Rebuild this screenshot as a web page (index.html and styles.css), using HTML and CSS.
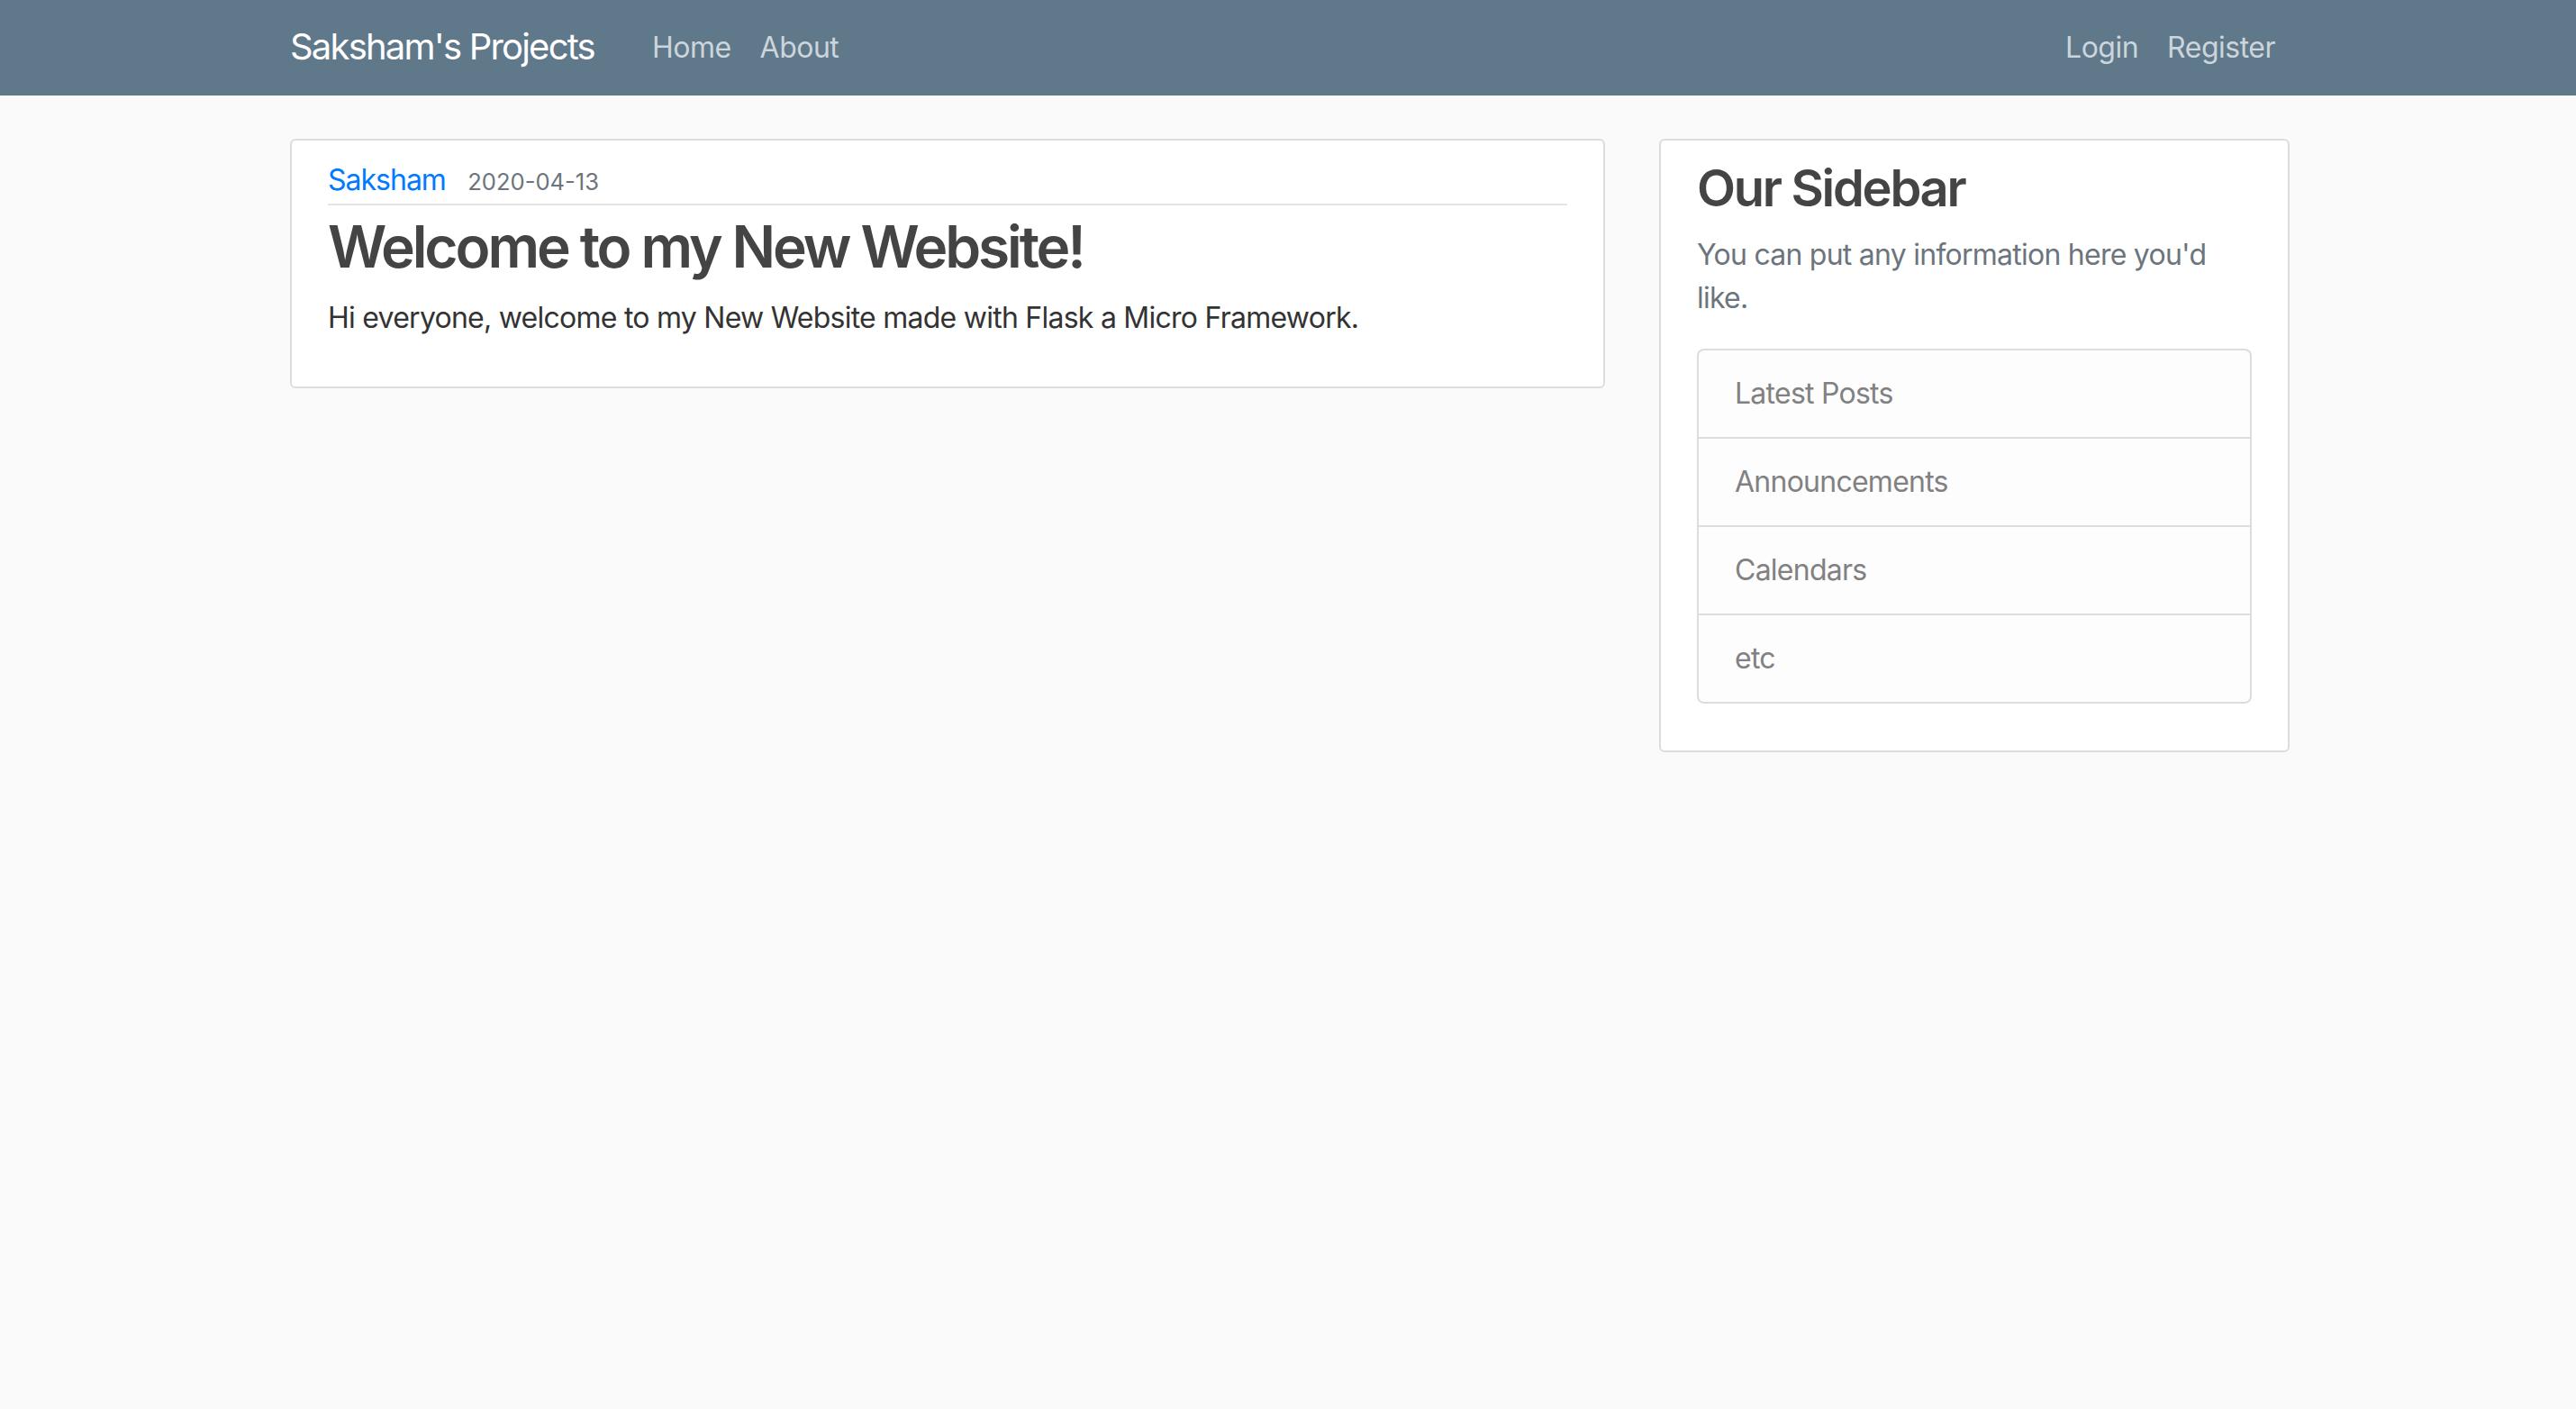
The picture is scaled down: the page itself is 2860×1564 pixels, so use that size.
FILE: index.html
```html
<!DOCTYPE html>
<html lang="en">
<head>
<meta charset="utf-8">
<title>Saksham's Projects</title>
<link rel="stylesheet" href="styles.css">
</head>
<body>
<header class="site-header">
  <nav class="navbar">
    <div class="container nav-inner">
      <a class="brand" href="#">Saksham's Projects</a>
      <div class="nav-left">
        <a class="nav-link" href="#">Home</a>
        <a class="nav-link" href="#">About</a>
      </div>
      <div class="nav-right">
        <a class="nav-link" href="#">Login</a>
        <a class="nav-link" href="#">Register</a>
      </div>
    </div>
  </nav>
</header>
<main class="container">
  <div class="row">
    <div class="col-main">
      <article class="content-section">
        <div class="article-metadata">
          <a class="author" href="#">Saksham</a>
          <small class="muted-small">2020-04-13</small>
        </div>
        <h2 class="article-title">Welcome to my New Website!</h2>
        <p class="article-content">Hi everyone, welcome to my New Website made with Flask a Micro Framework.</p>
      </article>
    </div>
    <div class="col-side">
      <div class="content-section">
        <h3 class="side-title">Our Sidebar</h3>
        <p class="muted">You can put any information here you'd like.</p>
        <ul class="list-group">
          <li class="list-item">Latest Posts</li>
          <li class="list-item">Announcements</li>
          <li class="list-item">Calendars</li>
          <li class="list-item">etc</li>
        </ul>
      </div>
    </div>
  </div>
</main>
</body>
</html>
```
FILE: styles.css
```css
* { box-sizing: border-box; }
html, body { margin: 0; padding: 0; }
body {
  background: #fafafa;
  color: #333333;
  font-family: Inter, "Noto Sans", "Liberation Sans", sans-serif;
  font-size: 32px;
  line-height: 48px;
  letter-spacing: -0.75px;
}
a { text-decoration: none; }
.container {
  width: 2280px;
  margin: 0 auto;
  padding: 0 28px 0 32px;
}
.navbar {
  background: #5f788a;
  height: 106px;
}
.nav-inner {
  display: flex;
  align-items: center;
  height: 106px;
}
.brand {
  color: #ffffff;
  font-size: 40px;
  line-height: 60px;
  margin-right: 48px;
  letter-spacing: -1.8px;
  position: relative;
  top: -1px;
}
.nav-left, .nav-right { display: flex; }
.nav-right { margin-left: auto; }
.nav-link {
  color: #cbd5db;
  font-size: 32px;
  line-height: 48px;
  padding: 0 16px;
  letter-spacing: -0.5px;
}
main.container { padding-top: 48px; }
.row {
  display: grid;
  grid-template-columns: 1460px 700px;
  column-gap: 60px;
  align-items: start;
}
.content-section {
  background: #ffffff;
  border: 2px solid #dddddd;
  border-radius: 6px;
  padding: 20px 40px;
  margin-bottom: 40px;
}
.article-metadata {
  border-bottom: 2px solid #e3e3e3;
  padding-bottom: 0;
  margin-bottom: 8px;
  line-height: 48px;
}
.author {
  color: #007bff;
  font-size: 32px;
  margin-right: 16px;
  letter-spacing: -1px;
}
.muted-small {
  color: #6c757d;
  font-size: 25.6px;
  letter-spacing: 0;
}
.article-title {
  color: #444444;
  font-size: 64px;
  font-weight: 600;
  line-height: 1.2;
  margin: 0 0 16px;
  letter-spacing: -3.1px;
}
.article-content {
  margin: 0 0 32px;
  color: #333333;
}
.side-title {
  color: #444444;
  font-size: 56px;
  font-weight: 600;
  line-height: 1.2;
  margin: 0 0 16px;
  letter-spacing: -2.3px;
}
.muted {
  color: #6c757d;
  margin: 0 0 32px;
}
.list-group {
  list-style: none;
  margin: 0 0 32px;
  padding: 0;
  border-radius: 8px;
}
.list-item {
  background: #fdfdfe;
  color: #818182;
  border: 2px solid rgba(0, 0, 0, 0.125);
  padding: 24px 40px;
  line-height: 48px;
}
.list-item + .list-item { border-top-width: 0; }
.list-item:first-child { border-radius: 8px 8px 0 0; }
.list-item:last-child { border-radius: 0 0 8px 8px; }
```
